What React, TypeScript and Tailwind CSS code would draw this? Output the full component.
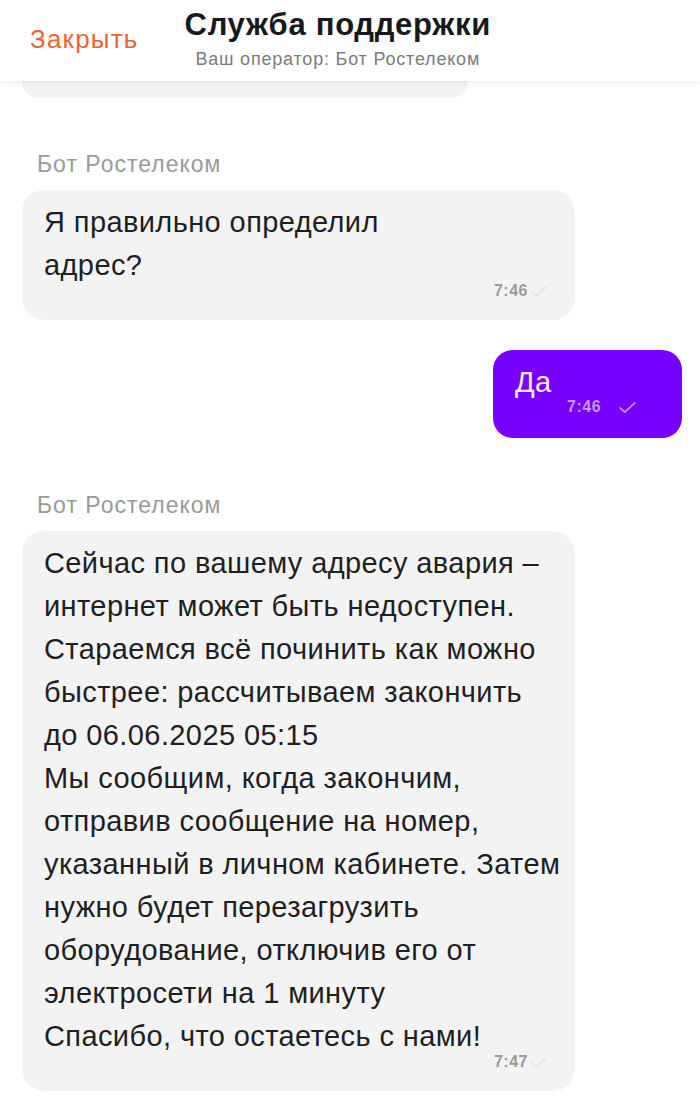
import React from 'react';

const font = { fontFamily: '"Liberation Sans", Arial, sans-serif' };

const Check = ({ className }: { className?: string }) => (
  <svg viewBox="0 0 20 14" className={className} fill="none" stroke="currentColor" strokeWidth={1.8} strokeLinecap="round" strokeLinejoin="round">
    <polyline points="2,7.5 7,12 18,2" />
  </svg>
);

const BotBubble = ({ lines, time }: { lines: string[]; time: string }) => (
  <div className="w-[553px] rounded-[22px] bg-[#f3f3f4] pl-[22px] pr-[27px] pt-[11px] pb-[21px]">
    <div className="text-[29px] leading-[43px] tracking-[0.4px] text-[#1f1f1f]">
      {lines.map((l, i) => (
        <div key={i} className="whitespace-nowrap">{l}</div>
      ))}
    </div>
    <div className="-mt-[4px] flex items-center justify-end gap-[2px] leading-[16px]">
      <span className="text-[16px] font-semibold tracking-[0.5px] text-[#9b9b9b]">{time}</span>
      <Check className="h-[13px] w-[18px] text-[#e2e2e2]" />
    </div>
  </div>
);

const Label = ({ children }: { children: React.ReactNode }) => (
  <div className="pl-[37px] text-[23px] leading-[24px] tracking-[1px] text-[#9a9a9a] mb-[14px]">{children}</div>
);

export default function App() {
  const message = [
    'Сейчас по вашему адресу авария –',
    'интернет может быть недоступен.',
    'Стараемся всё починить как можно',
    'быстрее: рассчитываем закончить',
    'до 06.06.2025 05:15',
    'Мы сообщим, когда закончим,',
    'отправив сообщение на номер,',
    'указанный в личном кабинете. Затем',
    'нужно будет перезагрузить',
    'оборудование, отключив его от',
    'электросети на 1 минуту',
    'Спасибо, что остаетесь с нами!',
  ];

  return (
    <div className="w-[700px] h-[1096px] overflow-hidden bg-white" style={font}>
      <header className="relative z-10 h-[81px] bg-white shadow-[0_2px_5px_rgba(0,0,0,0.08)] flex items-start">
        <button className="mt-[24px] ml-[30px] text-[26px] leading-[30px] tracking-[1.2px] text-[#ee6431]">Закрыть</button>
        <div className="ml-[46px] flex flex-col items-center">
          <div className="mt-[7px] text-[31px] leading-[36px] tracking-[0.7px] font-bold text-[#17191c]">Служба поддержки</div>
          <div className="mt-[6px] text-[18px] leading-[20px] tracking-[0.8px] text-[#7b7b7b]">Ваш оператор: Бот Ростелеком</div>
        </div>
      </header>

      <div className="ml-[22px] w-[446px] h-[17px] rounded-b-[20px] bg-[#f3f3f4]" />

      <div className="mt-[54px]">
        <Label>Бот Ростелеком</Label>
        <div className="pl-[22px]">
          <BotBubble lines={['Я правильно определил', 'адрес?']} time="7:46" />
        </div>
      </div>

      <div className="mt-[30px] flex justify-end pr-[18px]">
        <div className="w-[189px] h-[88px] rounded-[20px] bg-[#7700ff] pl-[22px] pt-[11px]">
          <div className="text-[29px] leading-[43px] tracking-[0.4px] text-[#f6ecff]">Да</div>
          <div className="-mt-[5px] flex items-center pl-[52px] leading-[16px]">
            <span className="text-[16px] font-semibold tracking-[0.5px] text-[#c69aff]">7:46</span>
            <Check className="ml-[17px] h-[13px] w-[19px] text-[#c69aff]" />
          </div>
        </div>
      </div>

      <div className="mt-[55px]">
        <Label>Бот Ростелеком</Label>
        <div className="pl-[22px]">
          <BotBubble lines={message} time="7:47" />
        </div>
      </div>
    </div>
  );
}
